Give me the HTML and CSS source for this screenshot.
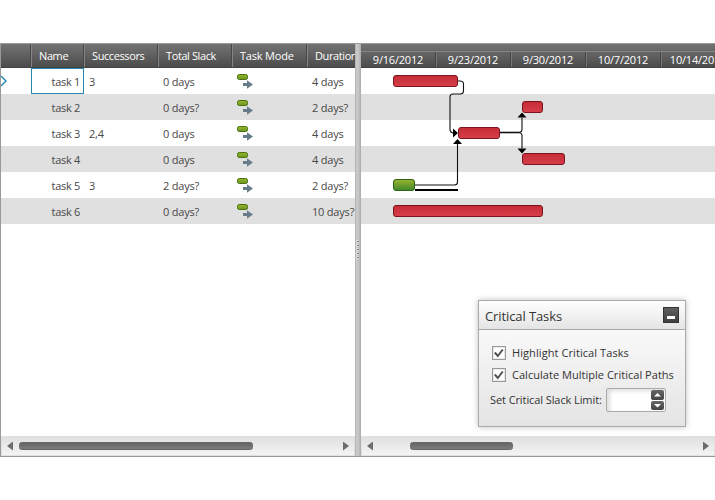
FILE: index.html
```
<!DOCTYPE html>
<html lang="en">
<head>
<meta charset="utf-8">
<title>Critical Tasks</title>
<link rel="stylesheet" href="styles.css">
</head>
<body>
<svg class="defs" width="0" height="0">
  <defs>
    <linearGradient id="pill" x1="0" y1="0" x2="0" y2="1"><stop offset="0" stop-color="#95b62c"/><stop offset="1" stop-color="#6d9526"/></linearGradient>
    <symbol id="mode" viewBox="0 0 17 16">
      <rect x=".5" y=".5" width="10" height="5" rx="1.800" fill="url(#pill)" stroke="#4b720c"/>
      <path d="M6 9h4V6.200l6 4.300-6 4.300V12H6z" fill="#687d8b"/>
    </symbol>
  </defs>
</svg>
<main class="gantt">
  <section class="grid">
    <div class="row head"><span></span><span>Name</span><span>Successors</span><span>Total Slack</span><span class="wide">Task Mode</span><span>Duration</span></div>
    <div class="row"><span class="marker"><svg width="7" height="12" viewBox="0 0 7 12"><path d="M0 1l5 5-5 5" fill="none" stroke="#2787b3" stroke-width="1.4"/></svg></span><span class="name active">task 1</span><span>3</span><span>0 days</span><span><svg class="mode"><use href="#mode"/></svg></span><span>4 days</span></div>
    <div class="row"><span></span><span class="name">task 2</span><span></span><span>0 days?</span><span><svg class="mode"><use href="#mode"/></svg></span><span>2 days?</span></div>
    <div class="row"><span></span><span class="name">task 3</span><span>2,4</span><span>0 days</span><span><svg class="mode"><use href="#mode"/></svg></span><span>4 days</span></div>
    <div class="row"><span></span><span class="name">task 4</span><span></span><span>0 days</span><span><svg class="mode"><use href="#mode"/></svg></span><span>4 days</span></div>
    <div class="row"><span></span><span class="name">task 5</span><span>3</span><span>2 days?</span><span><svg class="mode"><use href="#mode"/></svg></span><span>2 days?</span></div>
    <div class="row"><span></span><span class="name">task 6</span><span></span><span>0 days?</span><span><svg class="mode"><use href="#mode"/></svg></span><span>10 days?</span></div>
    <div class="scroll"><i class="prev"></i><div class="track"><b class="thumb left-thumb"></b></div><i class="next"></i></div>
  </section>
  <div class="splitter"><svg width="6" height="20" viewBox="0 0 6 20"><path d="M1 1.500h3M1 5.500h3M1 9.500h3M1 13.500h3M1 17.500h3" stroke="#eee" stroke-width="2"/><path d="M2 1.500h2M2 5.500h2M2 9.500h2M2 13.500h2M2 17.500h2" stroke="#777"/></svg></div>
  <section class="chart">
    <div class="timeline">
      <div class="upper"></div>
      <div class="weeks"><span>9/16/2012</span><span>9/23/2012</span><span>9/30/2012</span><span>10/7/2012</span><span>10/14/2012</span></div>
    </div>
    <svg class="bars" width="354" height="368" viewBox="361 68 354 368">
      <defs>
        <linearGradient id="red" x1="0" y1="0" x2="0" y2="1"><stop offset="0" stop-color="#c52b37"/><stop offset="1" stop-color="#d6404b"/></linearGradient>
        <linearGradient id="green" x1="0" y1="0" x2="0" y2="1"><stop offset="0" stop-color="#9ab52b"/><stop offset="1" stop-color="#41862f"/></linearGradient>
      </defs>
      <path d="M361 94h354v26H361zM361 146h354v26H361zM361 198h354v26H361z" fill="#e0e0e0"/>
      <g fill="none" stroke="#111" stroke-width="1.100">
        <path d="M458 81h2q3.500 0 3.500 3v7q0 3-3.500 3h-7q-3 0-3 3v32q0 4 4 4"/>
        <path d="M500 132.500h19" stroke-width="1.600"/>
        <path d="M518 132.500q4 0 4-3v-12M518 132.500q4 0 4 3v13"/>
        <path d="M415 185h39.500q3 0 3-3v-39"/>
      </g>
      <path d="M415 190h43" stroke="#000" stroke-width="2"/>
      <path d="M453 128.500l5 4.500-5 4.500zM517.500 117.500l4.500-5 4.500 5zM517.500 148.500l4.500 5 4.500-5zM453 144l4.500-5 4.500 5z" fill="#000"/>
      <g fill="url(#red)" stroke="#7c1420">
        <rect x="393.500" y="75.500" width="64" height="11" rx="2.500"/>
        <rect x="522.500" y="101.500" width="20" height="11" rx="2.500"/>
        <rect x="458.500" y="127.500" width="41" height="11" rx="2.500"/>
        <rect x="522.500" y="153.500" width="42" height="11" rx="2.500"/>
        <rect x="393.500" y="205.500" width="149" height="11" rx="2.500"/>
      </g>
      <rect x="393.500" y="179.500" width="21" height="11" rx="2.500" fill="url(#green)" stroke="#2c6119"/>
    </svg>
    <div class="scroll"><i class="prev"></i><div class="track"><b class="thumb right-thumb"></b></div><i class="next"></i></div>
  </section>
</main>
<aside class="dialog">
  <header><h1>Critical Tasks</h1><button class="min" aria-label="Minimize"></button></header>
  <div class="options">
    <label class="check"><span class="box"><svg width="12" height="12" viewBox="0 0 12 12"><path d="M1.800 5.500l3 3.500 5-6.500" fill="none" stroke="#505050" stroke-width="2"/></svg></span><span class="highlight">Highlight Critical Tasks</span></label>
    <label class="check"><span class="box"><svg width="12" height="12" viewBox="0 0 12 12"><path d="M1.800 5.500l3 3.500 5-6.500" fill="none" stroke="#505050" stroke-width="2"/></svg></span><span class="multiple">Calculate Multiple Critical Paths</span></label>
    <div class="limit"><span>Set Critical Slack Limit:</span><div class="spin"><div class="steps"><b><svg width="13" height="10"><path d="M3 6.500L6.500 3 10 6.500z" fill="#fff"/></svg></b><b><svg width="13" height="9"><path d="M3 3l3.500 3.500L10 3z" fill="#fff"/></svg></b></div></div></div>
  </div>
</aside>
</body>
</html>
```
FILE: styles.css
```
* { box-sizing: border-box; }
body { margin: 0; width: 715px; height: 500px; overflow: hidden; background: #fff; padding-top: 43px; font: 11px/14px "Open Sans", "Noto Sans", sans-serif; color: #484848; }
.defs { position: absolute; }
.gantt { display: flex; height: 414px; border: solid #999; border-width: 1px 0 1px 1px; }
.grid { width: 354px; display: flex; flex-direction: column; overflow: hidden; }
.row { display: grid; grid-template-columns: 30px 53px 74px 74px 75px 74px; height: 26px; flex: none; letter-spacing: -.2px; }
.row:nth-child(odd):not(.head) { background: #e0e0e0; }
.row span { padding: 7px 0 0 5px; white-space: nowrap; }
.row .name { padding: 7px 4px 0 0; text-align: right; letter-spacing: -.3px; }
.row .active { border: 1px solid #2787b3; padding: 6px 3px 0 0; }
.row .marker { padding: 7px 0 0; line-height: 0; }
.row.head { height: 24px; background: linear-gradient(#737373, #4c4c4c); color: #fff; border-bottom: 1px solid #444; letter-spacing: -.4px; }
.row.head span { padding: 5px 0 0 7px; border-left: 1px solid #858585; box-shadow: -1px 0 #484848; }
.row.head .wide { letter-spacing: -.2px; }
.row.head span:first-child { border: 0; box-shadow: none; }
.mode { display: block; width: 17px; height: 16px; margin: -1px 0 0; }
.splitter { width: 6px; background: linear-gradient(90deg, #aaa, #c9c9c9 25%, #c4c4c4 60%, #aaa); padding-top: 196px; line-height: 0; }
.chart { width: 354px; display: flex; flex-direction: column; overflow: hidden; }
.timeline { height: 24px; background: linear-gradient(#737373, #4c4c4c); color: #fff; flex: none; border-bottom: 1px solid #444; }
.upper { height: 8px; border-bottom: 1px solid #858585; }
.weeks { display: flex; width: 375px; letter-spacing: -.2px; }
.weeks span { width: 75px; height: 15px; text-align: center; border-right: 1px solid #444; box-shadow: 1px 0 #777; line-height: 16px; }
.bars { display: block; flex: none; }
.scroll { height: 20px; margin-top: auto; background: linear-gradient(#e0e0e0, #f4f4f4); border: 1px solid #e0e0e0; display: flex; align-items: center; flex: none; padding: 0 5px; }
.track { flex: 1; }
.thumb { display: block; height: 8px; border-radius: 2.500px; background: linear-gradient(#646464, #7c7c7c); border: 1px solid #686868; }
.left-thumb { width: 234px; margin-left: 7px; }
.right-thumb { width: 103px; margin-left: 38px; }
.prev, .next { width: 6px; height: 9px; background: #6c6c6c; }
.prev { clip-path: polygon(100% 0, 0 50%, 100% 100%); margin-right: -1px; }
.next { clip-path: polygon(0 0, 100% 50%, 0 100%); }
.dialog { position: absolute; left: 478px; top: 300px; width: 208px; height: 127px; border: 1px solid #aaa; background: linear-gradient(#fff, #e4e4e4); box-shadow: 0 0 6px rgba(0,0,0,.25); color: #333; }
.dialog header { height: 29px; border-bottom: 1px solid #aaa; background: linear-gradient(#fff, #e4e4e4); display: flex; justify-content: space-between; padding: 6px 6px 0; }
.dialog h1 { margin: 0; font-size: 13px; font-weight: 400; line-height: 18px; letter-spacing: -.1px; }
.min { display: flex; width: 16px; height: 16px; padding: 8px 3px 0; border: 1px solid #333; background: linear-gradient(#606060, #404040); }
.min::before { content: ""; width: 8px; height: 3px; background: #fff; }
.options { padding: 16px 0 0 13px; }
.check { display: flex; align-items: center; gap: 6px; height: 14px; margin-bottom: 8px; white-space: nowrap; }
.highlight { letter-spacing: .08px; }
.multiple { letter-spacing: .03px; }
.box { width: 14px; height: 14px; border: 1px solid #999; background: #fff; box-shadow: inset 0 0 0 1px #e8e8e8; line-height: 0; }
.limit { display: flex; align-items: center; margin: -2px 0 0 -2px; gap: 4px; white-space: nowrap; letter-spacing: -.09px; }
.spin { width: 60px; height: 24px; border: 1px solid #aaa; border-radius: 2px; background: #fff; box-shadow: inset 3px 2px 4px #ddd; display: flex; justify-content: flex-end; padding: 1px; }
.steps { display: flex; flex-direction: column; gap: 1px; }
.steps b { width: 13px; height: 10px; border-radius: 2px; background: linear-gradient(#666, #444); line-height: 0; }
```
